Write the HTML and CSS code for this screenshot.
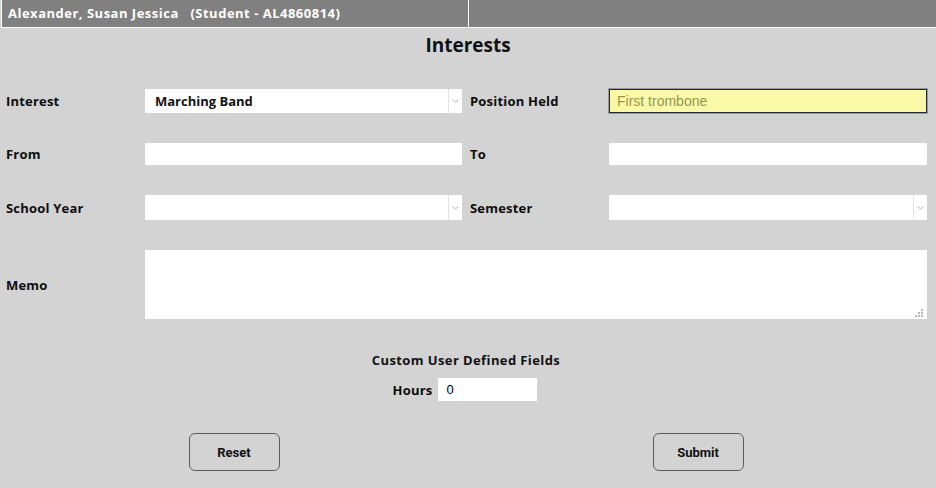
FILE: index.html
```html
<!DOCTYPE html>
<html lang="en">
<head>
<meta charset="utf-8">
<title>Interests</title>
<link rel="stylesheet" href="styles.css">
</head>
<body>
<div class="topbar">
  <div class="topbar-cell topbar-name">Alexander, Susan Jessica&nbsp;&nbsp; (Student - AL4860814)</div>
  <div class="topbar-cell"></div>
</div>

<h1 class="page-title">Interests</h1>

<div class="form-grid">
  <div class="label">Interest</div>
  <div class="select">
    <span class="select-value">Marching Band</span>
    <span class="select-arrow"><svg width="7" height="4" viewBox="0 0 7 4"><path d="M0.5 0.5 L3.5 3 L6.5 0.5" fill="none" stroke="#b4b4b4" stroke-width="1"/></svg></span>
  </div>
  <div class="label">Position Held</div>
  <input class="field field-highlight" type="text" value="First trombone">

  <div class="label">From</div>
  <input class="field field-short" type="text" value="">
  <div class="label">To</div>
  <input class="field field-short" type="text" value="">

  <div class="label">School Year</div>
  <div class="select select-tall">
    <span class="select-value"></span>
    <span class="select-arrow"><svg width="7" height="4" viewBox="0 0 7 4"><path d="M0.5 0.5 L3.5 3 L6.5 0.5" fill="none" stroke="#b4b4b4" stroke-width="1"/></svg></span>
  </div>
  <div class="label">Semester</div>
  <div class="select select-tall">
    <span class="select-value"></span>
    <span class="select-arrow"><svg width="7" height="4" viewBox="0 0 7 4"><path d="M0.5 0.5 L3.5 3 L6.5 0.5" fill="none" stroke="#b4b4b4" stroke-width="1"/></svg></span>
  </div>

  <div class="label">Memo</div>
  <div class="memo">
    <svg class="grip" width="8" height="8" viewBox="0 0 8 8">
      <rect x="6" y="0" width="2" height="2" fill="#b8b8b8"/>
      <rect x="3" y="3" width="2" height="2" fill="#b8b8b8"/>
      <rect x="6" y="3" width="2" height="2" fill="#b8b8b8"/>
      <rect x="0" y="6" width="2" height="2" fill="#b8b8b8"/>
      <rect x="3" y="6" width="2" height="2" fill="#b8b8b8"/>
      <rect x="6" y="6" width="2" height="2" fill="#b8b8b8"/>
    </svg>
  </div>
</div>

<div class="custom">
  <div class="custom-title">Custom User Defined Fields</div>
  <div class="custom-row">
    <span class="label">Hours</span>
    <input class="field hours" type="text" value="0">
  </div>
</div>

<div class="actions">
  <button class="btn" type="button">Reset</button>
  <button class="btn" type="button">Submit</button>
</div>
</body>
</html>
```

FILE: styles.css
```css
html, body {
  margin: 0;
  padding: 0;
}
body {
  background: #d3d3d3;
  font-family: "Open Sans", "DejaVu Sans", sans-serif;
  color: #111;
  width: 936px;
  height: 488px;
  overflow: hidden;
}
.topbar {
  display: grid;
  grid-template-columns: 466px 1fr;
  column-gap: 1px;
  background: #ffffff;
  padding: 0 0 1px 1px;
  margin-left: 1px;
  height: 27px;
}
.topbar-cell {
  background: #808080;
}
.topbar-name {
  color: #ffffff;
  font-weight: 700;
  font-size: 13px;
  line-height: 27px;
  padding-left: 6px;
  letter-spacing: 0.5px;
  white-space: pre;
}
.page-title {
  margin: 5px 0 0 0;
  font-size: 19px;
  line-height: 24px;
  font-weight: 700;
  text-align: center;
  color: #111;
}
.form-grid {
  display: grid;
  grid-template-columns: 139px 317px 139px 318px;
  column-gap: 0;
  row-gap: 30px;
  align-items: center;
  margin: 32px 0 0 6px;
}
.form-grid > .label:nth-child(4n+3) {
  margin-left: 8px;
}
.form-grid > :nth-child(4n+4) {
  margin-left: 8px;
  width: 318px;
}
.label {
  font-size: 13px;
  font-weight: 700;
  color: #0c0c0c;
  letter-spacing: 0.2px;
}
.select {
  display: flex;
  height: 24px;
  background: #ffffff;
}
.select-tall {
  height: 25px;
}
.select-value {
  flex: 1;
  font-size: 13px;
  font-weight: 700;
  padding-left: 10px;
  line-height: 24px;
}
.select-arrow {
  width: 13px;
  border-left: 1px solid #e2e2e2;
  display: flex;
  align-items: center;
  justify-content: center;
}
.field {
  box-sizing: border-box;
  border: none;
  background: #ffffff;
  font-family: "Liberation Sans", Arial, sans-serif;
  font-size: 14px;
  margin: 0;
  outline: none;
}
.field-short {
  height: 22px;
}
.field-highlight {
  height: 24px;
  background: #f9f9a8;
  border: 1px solid #1f2636;
  color: #97964c;
  padding: 0 7px;
  box-shadow: 0 0 0 1px #9a9a9a;
}
.form-grid > .field-highlight {
  width: 318px;
}
.memo {
  grid-column: 2 / 5;
  height: 69px;
  width: 782px;
  background: #ffffff;
  display: flex;
  justify-content: flex-end;
  align-items: flex-end;
  box-sizing: border-box;
  padding: 0 4px 2px 0;
}
.custom {
  margin-top: 32px;
  display: flex;
  flex-direction: column;
  align-items: center;
  padding-right: 4px;
}
.custom-title {
  font-size: 13px;
  font-weight: 700;
  line-height: 18px;
  letter-spacing: 0.4px;
}
.custom-row {
  display: flex;
  align-items: center;
  gap: 6px;
  margin-top: 9px;
  margin-right: 2px;
}
.hours {
  width: 99px;
  height: 23px;
  font-size: 13px;
  padding: 0 8px;
  color: #000;
}
.actions {
  display: grid;
  grid-template-columns: 1fr 1fr;
  justify-items: center;
  margin-top: 32px;
  padding: 0 6px 0 2px;
}
.btn {
  width: 91px;
  height: 38px;
  border: 1px solid #5a5a5a;
  border-radius: 6px;
  background: #d3d3d3;
  font-family: Roboto, "Liberation Sans", sans-serif;
  font-weight: 700;
  font-size: 13px;
  color: #111;
  padding: 0;
}
```
